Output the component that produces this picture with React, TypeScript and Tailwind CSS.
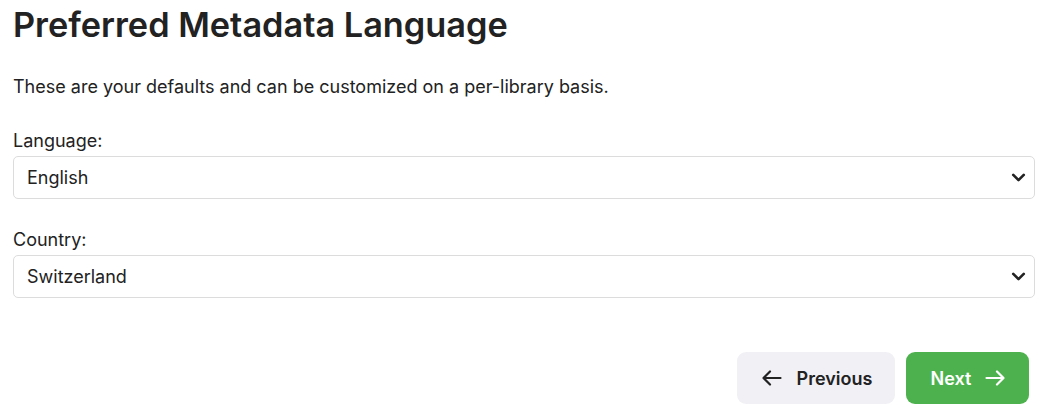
import { ChevronDown } from 'lucide-react';

const font = { fontFamily: 'Inter, "Noto Sans", sans-serif' };

function Arrow({ dir }: { dir: 'left' | 'right' }) {
  return (
    <svg width="20" height="16" viewBox="0 0 20 16" fill="none" stroke="currentColor" strokeWidth={2.2} strokeLinecap="round" strokeLinejoin="round">
      {dir === 'left' ? (
        <path d="M18.5 8H1.5M8 1.5L1.5 8L8 14.5" />
      ) : (
        <path d="M1.5 8H18.5M12 1.5L18.5 8L12 14.5" />
      )}
    </svg>
  );
}

function SelectField({ label, value }: { label: string; value: string }) {
  return (
    <div className="flex flex-col">
      <label className="text-[18px] leading-[24px] text-[#222] mb-[3px]">{label}</label>
      <div className="h-[43px] flex items-center justify-between border border-[#dcdcdc] rounded-[5px] bg-white pl-[13px] pr-[5px]">
        <span className="text-[18px] text-[#222]">{value}</span>
        <ChevronDown className="w-[21px] h-[21px] text-[#222]" strokeWidth={3} />
      </div>
    </div>
  );
}

export default function App() {
  return (
    <div className="bg-white w-[1062px] h-[413px] pl-[13px] pr-[27px] text-[#222]" style={font}>
      <h1 className="text-[34.3px] leading-[48px] font-semibold pt-[1px] text-[#222]">Preferred Metadata Language</h1>
      <p className="text-[18px] leading-[26px] mt-[25px]">
        These are your defaults and can be customized on a per-library basis.
      </p>
      <div className="mt-[29px] flex flex-col gap-[29px]">
        <SelectField label="Language:" value="English" />
        <SelectField label="Country:" value="Switzerland" />
      </div>
      <div className="flex justify-end gap-[11px] mt-[54px] mr-[6px]">
        <button className="h-[52px] w-[158px] rounded-[9px] bg-[#f0f0f5] flex items-center justify-center gap-[15px] pl-[2px] text-[18px] font-semibold text-[#222]">
          <Arrow dir="left" />
          Previous
        </button>
        <button className="h-[52px] w-[123px] rounded-[9px] bg-[#4db24d] flex items-center justify-center gap-[14px] pl-[1px] text-[18px] font-semibold text-white">
          Next
          <Arrow dir="right" />
        </button>
      </div>
    </div>
  );
}
